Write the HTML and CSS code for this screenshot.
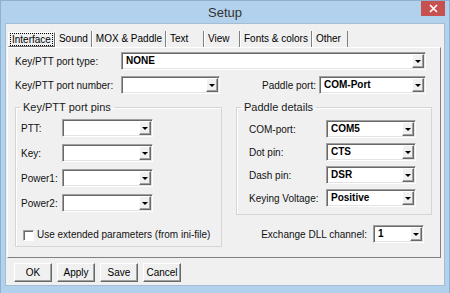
FILE: index.html
```html
<!DOCTYPE html>
<html lang="en">
<head>
    <meta charset="UTF-8">
    <title>Setup</title>
    <link rel="stylesheet" href="styles.css">
</head>
<body>
    <div class="window">
        <!-- Title bar -->
        <div class="titlebar">
            <span></span>
            <span class="title">Setup</span>
            <span class="close">
                <svg width="9" height="9" viewBox="0 0 9 9"><path d="M1 1L8 8M8 1L1 8" stroke="#fff" stroke-width="1.6"/></svg>
            </span>
        </div>

        <div class="client">
            <!-- Tabs -->
            <div class="tabs">
                <div class="tab active"><span>Interface</span></div>
                <div class="tab"><span>Sound</span></div>
                <div class="tab"><span>MOX &amp; Paddle</span></div>
                <div class="tab text-tab"><span>Text</span></div>
                <div class="tab"><span>View</span></div>
                <div class="tab"><span>Fonts &amp; colors</span></div>
                <div class="tab"><span>Other</span></div>
            </div>

            <!-- Interface page -->
            <div class="page">
                <div class="row">
                    <label class="label wide">Key/PTT port type:</label>
                    <div class="combo grow"><span class="value">NONE</span><span class="arrow"></span></div>
                </div>
                <div class="row second">
                    <label class="label wide">Key/PTT port number:</label>
                    <div class="combo port-number"><span class="value"></span><span class="arrow"></span></div>
                    <div class="paddle-port">
                        <label class="label">Paddle port:</label>
                        <div class="combo paddle-combo"><span class="value">COM-Port</span><span class="arrow"></span></div>
                    </div>
                </div>

                <div class="groups">
                    <fieldset class="group pins">
                        <legend>Key/PTT port pins</legend>
                        <div class="group-body">
                            <div class="field">
                                <label class="label">PTT:</label>
                                <div class="combo"><span class="value"></span><span class="arrow"></span></div>
                            </div>
                            <div class="field">
                                <label class="label">Key:</label>
                                <div class="combo"><span class="value"></span><span class="arrow"></span></div>
                            </div>
                            <div class="field">
                                <label class="label">Power1:</label>
                                <div class="combo"><span class="value"></span><span class="arrow"></span></div>
                            </div>
                            <div class="field">
                                <label class="label">Power2:</label>
                                <div class="combo"><span class="value"></span><span class="arrow"></span></div>
                            </div>
                            <div class="check-row">
                                <span class="checkbox"></span>
                                <span>Use extended parameters (from ini-file)</span>
                            </div>
                        </div>
                    </fieldset>

                    <div class="right-col">
                        <fieldset class="group paddle">
                            <legend>Paddle details</legend>
                            <div class="group-body">
                                <div class="field">
                                    <label class="label">COM-port:</label>
                                    <div class="combo"><span class="value">COM5</span><span class="arrow"></span></div>
                                </div>
                                <div class="field">
                                    <label class="label">Dot pin:</label>
                                    <div class="combo"><span class="value">CTS</span><span class="arrow"></span></div>
                                </div>
                                <div class="field">
                                    <label class="label">Dash pin:</label>
                                    <div class="combo"><span class="value">DSR</span><span class="arrow"></span></div>
                                </div>
                                <div class="field">
                                    <label class="label">Keying Voltage:</label>
                                    <div class="combo"><span class="value">Positive</span><span class="arrow"></span></div>
                                </div>
                            </div>
                        </fieldset>
                        <div class="exchange">
                            <label class="label">Exchange DLL channel:</label>
                            <div class="combo exchange-combo"><span class="value">1</span><span class="arrow"></span></div>
                        </div>
                    </div>
                </div>
            </div>

            <!-- Dialog buttons -->
            <div class="buttons">
                <button class="btn">OK</button>
                <button class="btn">Apply</button>
                <button class="btn">Save</button>
                <button class="btn">Cancel</button>
            </div>
        </div>
    </div>
</body>
</html>
```

FILE: styles.css
```css
/* Window frame */
body {
    margin: 0;
    font-family: "Liberation Sans", Arial, sans-serif;
    font-size: 10px;
    color: #000;
}

.window {
    width: 450px;
    height: 293px;
    box-sizing: border-box;
    background: #b1d1ec;
    border: 1px solid #8fb0cf;
    border-bottom: none;
}

.titlebar {
    height: 22px;
    display: grid;
    grid-template-columns: 1fr auto 1fr;
    align-items: center;
}

.title {
    font-size: 13px;
    color: #333;
}

.close {
    justify-self: end;
    align-self: start;
    width: 24px;
    height: 15px;
    margin-right: 4px;
    background: #c75050;
    display: flex;
    align-items: center;
    justify-content: center;
}

/* Client area */
.client {
    margin: 0 4px;
    height: 263px;
    box-sizing: border-box;
    background: #f0f0f0;
    border: 1px solid #a4bdd3;
    padding: 7px 0 0 1px;
}

/* Tabs */
.tabs {
    display: flex;
    height: 16px;
    padding-left: 1px;
}

.tab {
    min-width: 36px;
    box-sizing: border-box;
    padding: 0 3px;
    border-left: 1px solid #fff;
    border-right: 1px solid #808080;
    line-height: 15px;
    font-size: 10px;
    white-space: nowrap;
}

.tab.text-tab {
    min-width: 38px;
}

.tab.active {
    border: 1px solid;
    border-color: #fff #696969 #696969 #fff;
    padding: 0 2px;
    line-height: 13px;
    margin-top: 1px;
}

.tab.active span {
    outline: 1px dotted #000;
    padding: 0 1px;
}

/* Tab page */
.page {
    width: 434px;
    height: 211px;
    box-sizing: border-box;
    border: 1px solid;
    border-color: #fff #808080 #808080 #fff;
    padding: 4px 8px 0 7px;
}

.row {
    display: flex;
    align-items: center;
    padding-right: 6px;
}

.row.second {
    margin-top: 6px;
}

.label {
    white-space: nowrap;
    color: #111;
}

.label.wide {
    width: 106px;
    flex-shrink: 0;
}

.grow {
    flex: 1;
}

.port-number {
    width: 99px;
}

.paddle-port {
    margin-left: auto;
    display: flex;
    align-items: center;
    gap: 3px;
}

.paddle-combo {
    width: 107px;
}

/* Combo boxes */
.combo {
    display: flex;
    height: 18px;
    box-sizing: border-box;
    border: 1px solid;
    border-color: #a0a0a0 #fff #fff #a0a0a0;
    padding: 1px;
    box-shadow: inset 1px 1px #696969, inset -1px -1px #e3e3e3;
    background: #fff;
}

.combo .value {
    flex: 1;
    padding-left: 3px;
    font-weight: bold;
    line-height: 14px;
}

.combo .arrow {
    width: 12px;
    box-sizing: border-box;
    background: #f0f0f0;
    border: 1px solid;
    border-color: #fff #696969 #696969 #fff;
    box-shadow: inset -1px -1px #a0a0a0;
    display: flex;
    align-items: center;
    justify-content: center;
}

.combo .arrow::after {
    content: "";
    border-left: 3px solid transparent;
    border-right: 3px solid transparent;
    border-top: 3px solid #000;
    margin-top: 1px;
}

/* Group boxes */
.groups {
    display: flex;
    gap: 14px;
    margin-top: 6px;
}

.group {
    margin: 0;
    padding: 0 0 0 4px;
    border: 1px solid #d5d5d5;
    box-shadow: inset 1px 1px #fff;
    min-width: 0;
}

.group legend {
    padding: 0 3px;
    font-size: 11px;
    line-height: 14px;
    color: #1a1a1a;
}

.pins {
    width: 207px;
    box-sizing: border-box;
}

.pins .group-body {
    padding: 5px 0 4px 1px;
    display: flex;
    flex-direction: column;
    gap: 7px;
}

.pins .label {
    width: 41px;
}

.pins .combo {
    width: 91px;
}

.field {
    display: flex;
    align-items: center;
}

.check-row {
    display: flex;
    align-items: center;
    margin-top: 9px;
    padding-left: 2px;
    line-height: 14px;
    color: #111;
}

.checkbox {
    width: 11px;
    height: 11px;
    box-sizing: border-box;
    margin-right: 3px;
    background: #fff;
    border: 1px solid;
    border-color: #a0a0a0 #fff #fff #a0a0a0;
    box-shadow: inset 1px 1px #696969;
}

.right-col {
    width: 196px;
}

.paddle {
    box-sizing: border-box;
}

.paddle .group-body {
    padding: 6px 0 7px 8px;
    display: flex;
    flex-direction: column;
    gap: 5px;
}

.paddle .label {
    width: 77px;
}

.paddle .combo {
    width: 90px;
}

.exchange {
    display: flex;
    align-items: center;
    justify-content: flex-end;
    gap: 6px;
    margin-top: 10px;
    padding-right: 8px;
}

.exchange-combo {
    width: 51px;
}

/* Dialog buttons */
.buttons {
    display: flex;
    gap: 5px;
    margin-top: 5px;
    padding-left: 7px;
}

.btn {
    width: 38px;
    height: 19px;
    padding: 0;
    font-family: inherit;
    font-size: 10px;
    background: #f0f0f0;
    border: 1px solid;
    border-color: #fff #696969 #696969 #fff;
    box-shadow: inset -1px -1px #a0a0a0;
    color: #000;
}
```
